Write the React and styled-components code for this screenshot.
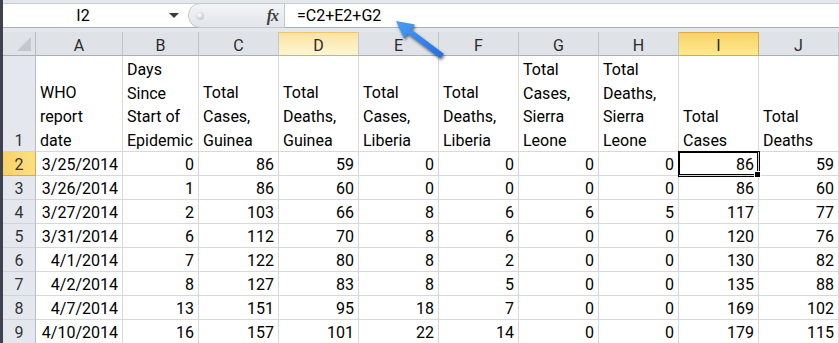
import React from "react";
import styled, { createGlobalStyle, css } from "styled-components";

const GlobalStyle = createGlobalStyle`
  html, body {
    margin: 0;
    padding: 0;
    background: #ffffff;
    overflow: hidden;
  }
  body {
    font-family: Roboto, "Liberation Sans", sans-serif;
  }
`;

const headers = [
  "WHO\nreport\ndate",
  "Days\nSince\nStart of\nEpidemic",
  "Total\nCases,\nGuinea",
  "Total\nDeaths,\nGuinea",
  "Total\nCases,\nLiberia",
  "Total\nDeaths,\nLiberia",
  "Total\nCases,\nSierra\nLeone",
  "Total\nDeaths,\nSierra\nLeone",
  "Total\nCases",
  "Total\nDeaths",
];

const rows = [
  ["3/25/2014", 0, 86, 59, 0, 0, 0, 0, 86, 59],
  ["3/26/2014", 1, 86, 60, 0, 0, 0, 0, 86, 60],
  ["3/27/2014", 2, 103, 66, 8, 6, 6, 5, 117, 77],
  ["3/31/2014", 6, 112, 70, 8, 6, 0, 0, 120, 76],
  ["4/1/2014", 7, 122, 80, 8, 2, 0, 0, 130, 82],
  ["4/2/2014", 8, 127, 83, 8, 5, 0, 0, 135, 88],
  ["4/7/2014", 13, 151, 95, 18, 7, 0, 0, 169, 102],
  ["4/10/2014", 16, 157, 101, 22, 14, 0, 0, 179, 115],
];

const letters = ["A", "B", "C", "D", "E", "F", "G", "H", "I", "J"];

const Window = styled.div`
  position: relative;
  width: 839px;
  height: 343px;
  box-sizing: border-box;
  border-left: 3px solid #3e4250;
  background: #ffffff;
  overflow: hidden;
`;

const FormulaBar = styled.div`
  background: #e4e7eb;
  padding: 3px 0 4px 0;
`;

const FormulaRow = styled.div`
  display: flex;
  align-items: stretch;
  height: 25px;
  background: #ffffff;
  border-top: 1px solid #c9ced4;
  border-bottom: 1px solid #a9b0b8;
  box-sizing: border-box;
`;

const NameBox = styled.div`
  width: 160px;
  display: flex;
  align-items: center;
  justify-content: center;
  font-size: 16px;
  color: #000;
`;

const Caret = styled.div`
  width: 22px;
  display: flex;
  align-items: center;
  justify-content: center;
  &::before {
    content: "";
    border-left: 5px solid transparent;
    border-right: 5px solid transparent;
    border-top: 5px solid #3a3a3a;
  }
`;

const Splitter = styled.div`
  margin-left: 3px;
  width: 97px;
  display: flex;
  align-items: center;
  justify-content: space-between;
  padding: 0 6px 0 7px;
  box-sizing: border-box;
  background: linear-gradient(#f3f4f6, #e2e5e9);
  border: 1px solid #c3c8ce;
  border-radius: 12px 0 0 12px;
  margin-top: -1px;
  margin-bottom: -1px;
`;

const Dot = styled.span`
  width: 8px;
  height: 8px;
  border-radius: 50%;
  background: radial-gradient(circle at 40% 35%, #ffffff 0, #d9dce0 45%, #b5bac1 100%);
`;

const Fx = styled.span`
  font-family: "Liberation Serif", "DejaVu Serif", serif;
  font-style: italic;
  font-weight: bold;
  font-size: 16px;
  color: #3f3f3f;
  letter-spacing: -1px;
`;

const Formula = styled.div`
  flex: 1;
  display: flex;
  align-items: center;
  padding-left: 12px;
  font-size: 16px;
  color: #000;
`;

const Sheet = styled.div`
  display: grid;
  grid-template-columns: 33px 87px 76px repeat(8, 80px);
  grid-template-rows: 24px 96px repeat(8, 24px);
`;

const HeadBase = css`
  box-sizing: border-box;
  display: flex;
  justify-content: center;
  font-size: 16px;
  color: #2b2b2b;
`;

const Corner = styled.div`
  ${HeadBase};
  position: relative;
  background: #dfe3e8;
  border-right: 1px solid #b7bdc5;
  border-bottom: 1px solid #a8afb8;
  &::after {
    content: "";
    position: absolute;
    right: 4px;
    bottom: 4px;
    border-left: 14px solid transparent;
    border-bottom: 14px solid #c3c8ce;
  }
`;

const headTone = {
  plain: css`
    background: #dfe3e8;
    border-right: 1px solid #c0c6cd;
    border-bottom: 1px solid #a8afb8;
  `,
  hover: css`
    background: linear-gradient(#fbe3a0, #fff6d6);
    border-top: 1px solid #efc769;
    border-right: 1px solid #c0c6cd;
    border-bottom: 1px solid #e3b04d;
  `,
  active: css`
    background: linear-gradient(#f8d268, #ffea8e);
    border: 1px solid #e0a744;
    border-left: none;
  `,
};

const ColHead = styled.div`
  ${HeadBase};
  align-items: center;
  padding-top: 3px;
  ${(p) => headTone[p.$tone || "plain"]};
`;

const RowHead = styled.div`
  ${HeadBase};
  align-items: flex-end;
  line-height: 20px;
  color: #333;
  ${(p) =>
    p.$active
      ? css`
          background: linear-gradient(90deg, #f8d268, #fddf80);
          border-right: 1px solid #e0a744;
          border-bottom: 1px solid #e0a744;
        `
      : css`
          background: #e4e8ee;
          border-right: 1px solid #b7bdc5;
          border-bottom: 1px solid #cfd4da;
        `};
`;

const Cell = styled.div`
  position: relative;
  box-sizing: border-box;
  border-right: 1px solid #d8d8d8;
  border-bottom: 1px solid #d8d8d8;
  font-size: 16px;
  line-height: 20px;
  color: #000;
  display: flex;
  flex-direction: column;
  justify-content: flex-end;
  align-items: ${(p) => (p.$num ? "flex-end" : "flex-start")};
  padding: ${(p) => (p.$num ? "0 4px 0 0" : "0 0 0 4px")};
  ${(p) =>
    p.$selected &&
    css`
      z-index: 2;
      box-shadow: 0 0 0 1px #000, inset 0 0 0 1px #000;
      &::after {
        content: "";
        position: absolute;
        right: -3px;
        bottom: -3px;
        width: 5px;
        height: 5px;
        background: #000;
        border: 1px solid #fff;
      }
    `};
`;

const Line = styled.div`
  height: 24px;
  display: flex;
  align-items: flex-end;
  white-space: nowrap;
`;

const Arrow = styled.svg`
  position: absolute;
  left: 380px;
  top: 10px;
  width: 70px;
  height: 55px;
  overflow: visible;
  filter: drop-shadow(1px 2px 1.5px rgba(0, 0, 0, 0.55));
  pointer-events: none;
`;

export default function App() {
  return (
    <>
      <GlobalStyle />
      <Window>
        <FormulaBar>
          <FormulaRow>
            <NameBox>I2</NameBox>
            <Caret />
            <Splitter>
              <Dot />
              <Fx>fx</Fx>
            </Splitter>
            <Formula>=C2+E2+G2</Formula>
          </FormulaRow>
        </FormulaBar>

        <Sheet>
          <Corner />
          {letters.map((l) => (
            <ColHead key={l} $tone={l === "I" ? "active" : l === "D" ? "hover" : "plain"}>
              {l}
            </ColHead>
          ))}

          <RowHead>1</RowHead>
          {headers.map((h, i) => (
            <Cell key={i}>
              {h.split("\n").map((t) => (
                <Line key={t}>{t}</Line>
              ))}
            </Cell>
          ))}

          {rows.map((r, ri) => (
            <React.Fragment key={ri}>
              <RowHead $active={ri === 0}>{ri + 2}</RowHead>
              {r.map((v, ci) => (
                <Cell key={ci} $num $selected={ri === 0 && ci === 8}>
                  {v}
                </Cell>
              ))}
            </React.Fragment>
          ))}
        </Sheet>

        <Arrow viewBox="380 10 70 55">
          <defs>
            <linearGradient id="arrowFill" x1="1" y1="1" x2="0" y2="0">
              <stop offset="0" stopColor="#1f6fe3" />
              <stop offset="1" stopColor="#4a9ef4" />
            </linearGradient>
          </defs>
          <polygon
            points="393,21 412,24.5 408.4,29.4 440.8,53.8 437.2,58.2 404.6,33.4 401.2,38.5"
            fill="url(#arrowFill)"
          />
        </Arrow>
      </Window>
    </>
  );
}
